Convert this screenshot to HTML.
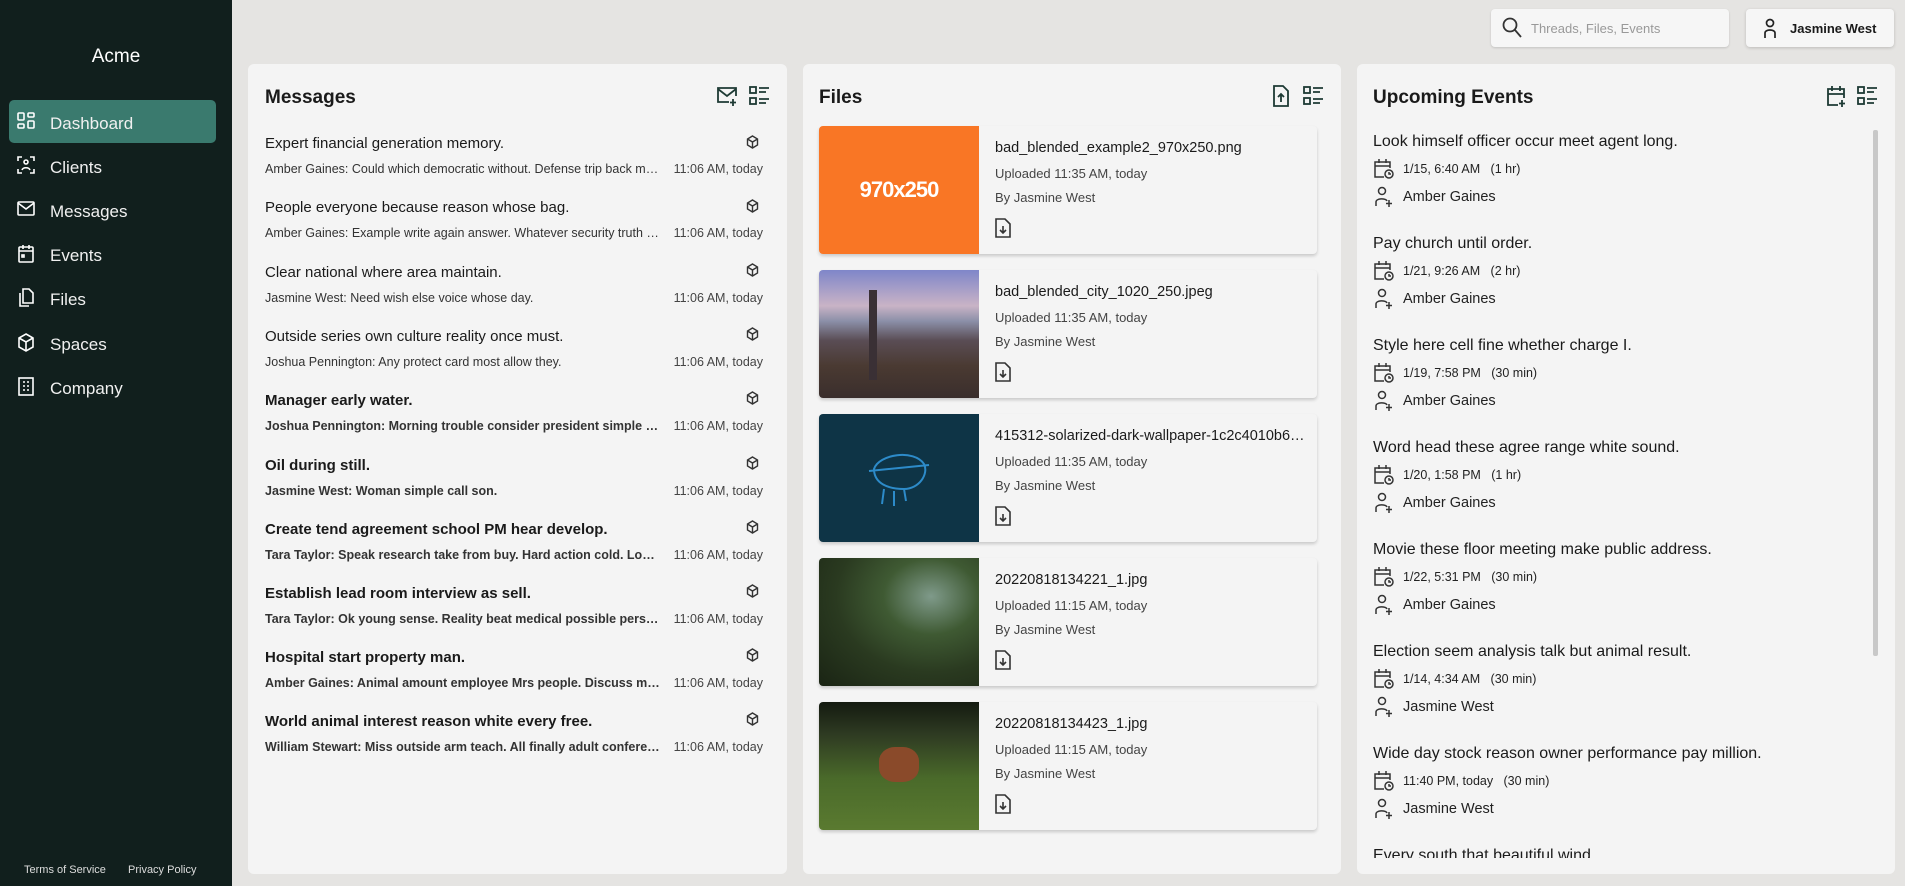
<!DOCTYPE html>
<html><head><meta charset="utf-8"><style>
*{box-sizing:border-box;margin:0;padding:0}
body{width:1905px;height:886px;overflow:hidden;background:#e5e4e2;font-family:"Liberation Sans",sans-serif;color:#1a1a1a;position:relative}
.side{position:absolute;left:0;top:0;width:232px;height:886px;background:#111f1d;color:#fff}
.logo{position:absolute;top:46px;width:232px;text-align:center;font-size:19px}
.nav{position:absolute;left:9px;width:207px;height:43px;border-radius:5px;display:flex;align-items:center;font-size:17px;color:#f0f0f0}
.nav.act{background:#3a7a6e}
.nav svg{position:absolute;left:8px;top:12px}
.nav span{position:absolute;left:41px;top:14px}
.foot{position:absolute;top:864px;font-size:11px;color:#ddd}
.card{position:absolute;top:64px;height:810px;background:#f4f4f4;border-radius:6px;overflow:hidden}
.h{position:absolute;top:87px;font-size:19px;font-weight:bold}
.ic{position:absolute;top:85px}
.mt{position:absolute;left:265px;font-size:15px;white-space:nowrap;margin-top:2px}
.ms{position:absolute;left:265px;width:396px;font-size:12.5px;color:#333;white-space:nowrap;overflow:hidden;text-overflow:ellipsis;margin-top:1px}
.mtime{position:absolute;right:1142px;font-size:12.5px;color:#444;margin-top:1px}
.b{font-weight:bold}
.cube{position:absolute;left:746px}
.fc{position:absolute;left:819px;width:498px;height:128px;background:#f4f4f4;border-radius:4px;box-shadow:0 2px 3px rgba(0,0,0,.18);overflow:hidden}
.th{position:absolute;left:0;top:0;width:160px;height:128px}
.fn{position:absolute;left:176px;top:14px;font-size:14.5px;white-space:nowrap;width:315px;overflow:hidden;text-overflow:ellipsis}
.fu{position:absolute;left:176px;top:40px;font-size:13px;color:#444}
.fb{position:absolute;left:176px;top:64px;font-size:13px;color:#444}
.fd{position:absolute;left:176px;top:92px}
.et{position:absolute;left:1373px;font-size:16px;white-space:nowrap;margin-top:2px}
.ed{position:absolute;left:1403px;font-size:12.5px;color:#222;margin-top:1px}
.ep{position:absolute;left:1403px;font-size:14.5px;color:#222;margin-top:2px}
.ei{position:absolute;left:1374px}
</style></head><body>
<div class="side">
<div class="logo">Acme</div>
<div class="nav act" style="top:100px"><svg width="18" height="20" viewBox="0 0 18 20" fill="none" stroke="#fff" stroke-width="1.6"><rect x="1" y="1" width="6" height="7" rx="1"/><rect x="11" y="1" width="6" height="4" rx="1"/><rect x="1" y="12" width="6" height="4" rx="1"/><rect x="11" y="9" width="6" height="7" rx="1"/></svg><span>Dashboard</span></div>
<div class="nav" style="top:144px"><svg width="18" height="20" viewBox="0 0 18 20" fill="none" stroke="#fff" stroke-width="1.6"><path d="M1 5V1h4M13 1h4v4M1 13v4h4M13 17h4v-4"/><circle cx="9" cy="6" r="2"/><path d="M5 14c1-3 7-3 8 0"/></svg><span>Clients</span></div>
<div class="nav" style="top:188px"><svg width="18" height="20" viewBox="0 0 18 20" fill="none" stroke="#fff" stroke-width="1.6"><rect x="1" y="2" width="16" height="13" rx="1"/><path d="M1 3l8 6 8-6"/></svg><span>Messages</span></div>
<div class="nav" style="top:232px"><svg width="18" height="20" viewBox="0 0 18 20" fill="none" stroke="#fff" stroke-width="1.6"><rect x="2" y="3" width="14" height="15" rx="1"/><path d="M2 7h14M6 1v4M12 1v4"/><rect x="5" y="11" width="2" height="2"/></svg><span>Events</span></div>
<div class="nav" style="top:276px"><svg width="18" height="20" viewBox="0 0 18 20" fill="none" stroke="#fff" stroke-width="1.6"><path d="M6 1h6l4 4v10H6z"/><path d="M3 5v13h9"/></svg><span>Files</span></div>
<div class="nav" style="top:321px"><svg width="18" height="20" viewBox="0 0 18 20" fill="none" stroke="#fff" stroke-width="1.6"><path d="M9 1l7 4v9l-7 4-7-4V5z"/><path d="M2 5l7 4 7-4M9 9v9"/></svg><span>Spaces</span></div>
<div class="nav" style="top:365px"><svg width="18" height="20" viewBox="0 0 18 20" fill="none" stroke="#fff" stroke-width="1.6"><rect x="2" y="1" width="14" height="17"/><path d="M6 5h2M10 5h2M6 9h2M10 9h2M6 13h2M10 13h2"/></svg><span>Company</span></div>
<div class="foot" style="left:24px">Terms of Service</div>
<div class="foot" style="left:128px">Privacy Policy</div>
</div>

<div style="position:absolute;left:1491px;top:9px;width:238px;height:38px;background:#f6f6f6;border-radius:4px;box-shadow:0 1px 2px rgba(0,0,0,.15)">
<svg style="position:absolute;left:11px;top:8px" width="20" height="22" viewBox="0 0 20 22" fill="none" stroke="#333" stroke-width="1.8"><circle cx="8" cy="8" r="6.5"/><path d="M13 13l6 7"/></svg>
<div style="position:absolute;left:40px;top:12px;font-size:13px;color:#999">Threads, Files, Events</div></div>
<div style="position:absolute;left:1746px;top:9px;width:148px;height:38px;background:#f6f6f6;border-radius:4px;box-shadow:0 1px 3px rgba(0,0,0,.18)">
<svg style="position:absolute;left:17px;top:9px" width="14" height="21" viewBox="0 0 14 21" fill="none" stroke="#222" stroke-width="1.7"><circle cx="7" cy="5" r="3.5"/><path d="M2 20v-5c0-4 10-4 10 0v5"/></svg>
<div style="position:absolute;left:44px;top:12px;font-size:13px;font-weight:bold">Jasmine West</div></div>

<div class="card" style="left:248px;width:539px"></div>
<div class="card" style="left:803px;width:538px"></div>
<div class="card" style="left:1357px;width:538px"></div>

<div class="h" style="left:265px">Messages</div>
<svg class="ic" style="left:716px" width="22" height="22" viewBox="0 0 22 22" fill="none" stroke="#1d3a34" stroke-width="1.8"><path d="M13 17H2V3h18v8"/><path d="M2 4l9 7 9-7M17 14v7M14 17.5h6"/></svg>
<svg class="ic" style="left:749px" width="22" height="22" viewBox="0 0 22 22" fill="none" stroke="#1d3a34" stroke-width="1.8"><rect x="1" y="2" width="6" height="6"/><rect x="1" y="13" width="6" height="6"/><path d="M10 3h10M10 7h7M10 14h10M10 18h7"/></svg>

<div class="h" style="left:819px">Files</div>
<svg class="ic" style="left:1272px" width="18" height="22" viewBox="0 0 18 22" fill="none" stroke="#1d3a34" stroke-width="1.8"><path d="M2 1h9l5 5v15H2z"/><path d="M9 17V9M6 12l3-3 3 3"/></svg>
<svg class="ic" style="left:1303px" width="22" height="22" viewBox="0 0 22 22" fill="none" stroke="#1d3a34" stroke-width="1.8"><rect x="1" y="2" width="6" height="6"/><rect x="1" y="13" width="6" height="6"/><path d="M10 3h10M10 7h7M10 14h10M10 18h7"/></svg>

<div class="h" style="left:1373px">Upcoming Events</div>
<svg class="ic" style="left:1826px" width="21" height="23" viewBox="0 0 21 23" fill="none" stroke="#1d3a34" stroke-width="1.8"><path d="M12 20H2V4h16v9M2 9h16M6 1v5M14 1v5M16 15v7M13 18.5h6"/></svg>
<svg class="ic" style="left:1857px" width="22" height="22" viewBox="0 0 22 22" fill="none" stroke="#1d3a34" stroke-width="1.8"><rect x="1" y="2" width="6" height="6"/><rect x="1" y="13" width="6" height="6"/><path d="M10 3h10M10 7h7M10 14h10M10 18h7"/></svg>

<div class="mt" style="top:133px">Expert financial generation memory.</div><div class="ms" style="top:161px">Amber Gaines: Could which democratic without. Defense trip back more</div><div class="mtime" style="top:161px">11:06 AM, today</div>
<div class="mt" style="top:197px">People everyone because reason whose bag.</div><div class="ms" style="top:225px">Amber Gaines: Example write again answer. Whatever security truth now</div><div class="mtime" style="top:225px">11:06 AM, today</div>
<div class="mt" style="top:262px">Clear national where area maintain.</div><div class="ms" style="top:290px">Jasmine West: Need wish else voice whose day.</div><div class="mtime" style="top:290px">11:06 AM, today</div>
<div class="mt" style="top:326px">Outside series own culture reality once must.</div><div class="ms" style="top:354px">Joshua Pennington: Any protect card most allow they.</div><div class="mtime" style="top:354px">11:06 AM, today</div>
<div class="mt b" style="top:390px">Manager early water.</div><div class="ms b" style="top:418px">Joshua Pennington: Morning trouble consider president simple about</div><div class="mtime" style="top:418px">11:06 AM, today</div>
<div class="mt b" style="top:455px">Oil during still.</div><div class="ms b" style="top:483px">Jasmine West: Woman simple call son.</div><div class="mtime" style="top:483px">11:06 AM, today</div>
<div class="mt b" style="top:519px">Create tend agreement school PM hear develop.</div><div class="ms b" style="top:547px">Tara Taylor: Speak research take from buy. Hard action cold. Love more</div><div class="mtime" style="top:547px">11:06 AM, today</div>
<div class="mt b" style="top:583px">Establish lead room interview as sell.</div><div class="ms b" style="top:611px">Tara Taylor: Ok young sense. Reality beat medical possible person now</div><div class="mtime" style="top:611px">11:06 AM, today</div>
<div class="mt b" style="top:647px">Hospital start property man.</div><div class="ms b" style="top:675px">Amber Gaines: Animal amount employee Mrs people. Discuss many more</div><div class="mtime" style="top:675px">11:06 AM, today</div>
<div class="mt b" style="top:711px">World animal interest reason white every free.</div><div class="ms b" style="top:739px">William Stewart: Miss outside arm teach. All finally adult conference</div><div class="mtime" style="top:739px">11:06 AM, today</div>
<svg class="cube" style="top:135px" width="13" height="14" viewBox="0 0 13 14" fill="none" stroke="#333" stroke-width="1.4"><path d="M6.5 1l5 3v6l-5 3-5-3V4zM1.5 4l5 3 5-3M6.5 7v6"/></svg>
<svg class="cube" style="top:199px" width="13" height="14" viewBox="0 0 13 14" fill="none" stroke="#333" stroke-width="1.4"><path d="M6.5 1l5 3v6l-5 3-5-3V4zM1.5 4l5 3 5-3M6.5 7v6"/></svg>
<svg class="cube" style="top:263px" width="13" height="14" viewBox="0 0 13 14" fill="none" stroke="#333" stroke-width="1.4"><path d="M6.5 1l5 3v6l-5 3-5-3V4zM1.5 4l5 3 5-3M6.5 7v6"/></svg>
<svg class="cube" style="top:327px" width="13" height="14" viewBox="0 0 13 14" fill="none" stroke="#333" stroke-width="1.4"><path d="M6.5 1l5 3v6l-5 3-5-3V4zM1.5 4l5 3 5-3M6.5 7v6"/></svg>
<svg class="cube" style="top:391px" width="13" height="14" viewBox="0 0 13 14" fill="none" stroke="#333" stroke-width="1.4"><path d="M6.5 1l5 3v6l-5 3-5-3V4zM1.5 4l5 3 5-3M6.5 7v6"/></svg>
<svg class="cube" style="top:456px" width="13" height="14" viewBox="0 0 13 14" fill="none" stroke="#333" stroke-width="1.4"><path d="M6.5 1l5 3v6l-5 3-5-3V4zM1.5 4l5 3 5-3M6.5 7v6"/></svg>
<svg class="cube" style="top:520px" width="13" height="14" viewBox="0 0 13 14" fill="none" stroke="#333" stroke-width="1.4"><path d="M6.5 1l5 3v6l-5 3-5-3V4zM1.5 4l5 3 5-3M6.5 7v6"/></svg>
<svg class="cube" style="top:584px" width="13" height="14" viewBox="0 0 13 14" fill="none" stroke="#333" stroke-width="1.4"><path d="M6.5 1l5 3v6l-5 3-5-3V4zM1.5 4l5 3 5-3M6.5 7v6"/></svg>
<svg class="cube" style="top:648px" width="13" height="14" viewBox="0 0 13 14" fill="none" stroke="#333" stroke-width="1.4"><path d="M6.5 1l5 3v6l-5 3-5-3V4zM1.5 4l5 3 5-3M6.5 7v6"/></svg>
<svg class="cube" style="top:712px" width="13" height="14" viewBox="0 0 13 14" fill="none" stroke="#333" stroke-width="1.4"><path d="M6.5 1l5 3v6l-5 3-5-3V4zM1.5 4l5 3 5-3M6.5 7v6"/></svg>

<div class="fc" style="top:126px"><div class="th" style="background:#f97625;color:#fff;font-weight:bold;font-size:22px;display:flex;align-items:center;justify-content:center;letter-spacing:-1px">970x250</div><div class="fn">bad_blended_example2_970x250.png</div><div class="fu">Uploaded 11:35 AM, today</div><div class="fb">By Jasmine West</div><svg class="fd" width="16" height="20" viewBox="0 0 16 20" fill="none" stroke="#333" stroke-width="1.6"><path d="M1 1h9l5 5v13H1z"/><path d="M8 8v7M5 12l3 3 3-3"/></svg></div>
<div class="fc" style="top:270px"><div class="th" style="background:linear-gradient(180deg,#7f86c9 0%,#c9b3c6 28%,#8b8fa8 40%,#5a4d55 55%,#4a3a32 75%,#3a2e2c 100%)"><div style="position:absolute;left:50px;top:20px;width:8px;height:90px;background:#3a3035"></div></div><div class="fn">bad_blended_city_1020_250.jpeg</div><div class="fu">Uploaded 11:35 AM, today</div><div class="fb">By Jasmine West</div><svg class="fd" width="16" height="20" viewBox="0 0 16 20" fill="none" stroke="#333" stroke-width="1.6"><path d="M1 1h9l5 5v13H1z"/><path d="M8 8v7M5 12l3 3 3-3"/></svg></div>
<div class="fc" style="top:414px"><div class="th" style="background:#0e3446"><svg style="position:absolute;left:45px;top:25px" width="70" height="70" viewBox="0 0 70 70" fill="none" stroke="#2d8bc9" stroke-width="2"><path d="M10 30c5-15 40-20 50-5 5 10-5 25-20 25-15 0-30-5-30-20zM5 32l60-6M20 50l-2 15M30 52v15M40 50l2 12"/></svg></div><div class="fn">415312-solarized-dark-wallpaper-1c2c4010b6d0d6e7a</div><div class="fu">Uploaded 11:35 AM, today</div><div class="fb">By Jasmine West</div><svg class="fd" width="16" height="20" viewBox="0 0 16 20" fill="none" stroke="#333" stroke-width="1.6"><path d="M1 1h9l5 5v13H1z"/><path d="M8 8v7M5 12l3 3 3-3"/></svg></div>
<div class="fc" style="top:558px"><div class="th" style="background:radial-gradient(ellipse at 70% 30%,#7f9a8a 0%,#3f5a33 30%,#2a3a20 60%,#1a2414 100%)"></div><div class="fn">20220818134221_1.jpg</div><div class="fu">Uploaded 11:15 AM, today</div><div class="fb">By Jasmine West</div><svg class="fd" width="16" height="20" viewBox="0 0 16 20" fill="none" stroke="#333" stroke-width="1.6"><path d="M1 1h9l5 5v13H1z"/><path d="M8 8v7M5 12l3 3 3-3"/></svg></div>
<div class="fc" style="top:702px"><div class="th" style="background:linear-gradient(180deg,#141a10 0%,#2e3a22 25%,#4a6a2a 60%,#5a7a30 100%)"><div style="position:absolute;left:60px;top:45px;width:40px;height:35px;background:#8a4a2a;border-radius:40%"></div></div><div class="fn">20220818134423_1.jpg</div><div class="fu">Uploaded 11:15 AM, today</div><div class="fb">By Jasmine West</div><svg class="fd" width="16" height="20" viewBox="0 0 16 20" fill="none" stroke="#333" stroke-width="1.6"><path d="M1 1h9l5 5v13H1z"/><path d="M8 8v7M5 12l3 3 3-3"/></svg></div>

<div style="position:absolute;left:1873px;top:130px;width:5px;height:526px;background:#c8c8c8;border-radius:2px"></div>
<div style="position:absolute;left:1357px;top:64px;width:538px;height:794px;overflow:hidden">
<div style="position:absolute;left:-1357px;top:-64px;width:1905px">
<div class="et" style="top:131px">Look himself officer occur meet agent long.</div><div class="ed" style="top:161px">1/15, 6:40 AM &nbsp;&nbsp;(1 hr)</div><div class="ep" style="top:187px">Amber Gaines</div>
<div class="et" style="top:233px">Pay church until order.</div><div class="ed" style="top:263px">1/21, 9:26 AM &nbsp;&nbsp;(2 hr)</div><div class="ep" style="top:289px">Amber Gaines</div>
<div class="et" style="top:335px">Style here cell fine whether charge I.</div><div class="ed" style="top:365px">1/19, 7:58 PM &nbsp;&nbsp;(30 min)</div><div class="ep" style="top:391px">Amber Gaines</div>
<div class="et" style="top:437px">Word head these agree range white sound.</div><div class="ed" style="top:467px">1/20, 1:58 PM &nbsp;&nbsp;(1 hr)</div><div class="ep" style="top:493px">Amber Gaines</div>
<div class="et" style="top:539px">Movie these floor meeting make public address.</div><div class="ed" style="top:569px">1/22, 5:31 PM &nbsp;&nbsp;(30 min)</div><div class="ep" style="top:595px">Amber Gaines</div>
<div class="et" style="top:641px">Election seem analysis talk but animal result.</div><div class="ed" style="top:671px">1/14, 4:34 AM &nbsp;&nbsp;(30 min)</div><div class="ep" style="top:697px">Jasmine West</div>
<div class="et" style="top:743px">Wide day stock reason owner performance pay million.</div><div class="ed" style="top:773px">11:40 PM, today &nbsp;&nbsp;(30 min)</div><div class="ep" style="top:799px">Jasmine West</div>
<div class="et" style="top:845px">Every south that beautiful wind.</div>
<svg class="ei" style="top:158px" width="20" height="22" viewBox="0 0 20 22" fill="none" stroke="#333" stroke-width="1.5"><path d="M10 19H1V4h15v6M1 8h15M5 1v4M12 1v4"/><circle cx="15" cy="16" r="4"/><path d="M15 14v2h2"/></svg>
<svg class="ei" style="top:260px" width="20" height="22" viewBox="0 0 20 22" fill="none" stroke="#333" stroke-width="1.5"><path d="M10 19H1V4h15v6M1 8h15M5 1v4M12 1v4"/><circle cx="15" cy="16" r="4"/><path d="M15 14v2h2"/></svg>
<svg class="ei" style="top:362px" width="20" height="22" viewBox="0 0 20 22" fill="none" stroke="#333" stroke-width="1.5"><path d="M10 19H1V4h15v6M1 8h15M5 1v4M12 1v4"/><circle cx="15" cy="16" r="4"/><path d="M15 14v2h2"/></svg>
<svg class="ei" style="top:464px" width="20" height="22" viewBox="0 0 20 22" fill="none" stroke="#333" stroke-width="1.5"><path d="M10 19H1V4h15v6M1 8h15M5 1v4M12 1v4"/><circle cx="15" cy="16" r="4"/><path d="M15 14v2h2"/></svg>
<svg class="ei" style="top:566px" width="20" height="22" viewBox="0 0 20 22" fill="none" stroke="#333" stroke-width="1.5"><path d="M10 19H1V4h15v6M1 8h15M5 1v4M12 1v4"/><circle cx="15" cy="16" r="4"/><path d="M15 14v2h2"/></svg>
<svg class="ei" style="top:668px" width="20" height="22" viewBox="0 0 20 22" fill="none" stroke="#333" stroke-width="1.5"><path d="M10 19H1V4h15v6M1 8h15M5 1v4M12 1v4"/><circle cx="15" cy="16" r="4"/><path d="M15 14v2h2"/></svg>
<svg class="ei" style="top:770px" width="20" height="22" viewBox="0 0 20 22" fill="none" stroke="#333" stroke-width="1.5"><path d="M10 19H1V4h15v6M1 8h15M5 1v4M12 1v4"/><circle cx="15" cy="16" r="4"/><path d="M15 14v2h2"/></svg>
<svg class="ei" style="top:186px" width="20" height="22" viewBox="0 0 20 22" fill="none" stroke="#333" stroke-width="1.5"><circle cx="8" cy="5" r="3.5"/><path d="M2 20v-4c0-4 10-4 11-1M15 14v7M12 17.5h6"/></svg>
<svg class="ei" style="top:288px" width="20" height="22" viewBox="0 0 20 22" fill="none" stroke="#333" stroke-width="1.5"><circle cx="8" cy="5" r="3.5"/><path d="M2 20v-4c0-4 10-4 11-1M15 14v7M12 17.5h6"/></svg>
<svg class="ei" style="top:390px" width="20" height="22" viewBox="0 0 20 22" fill="none" stroke="#333" stroke-width="1.5"><circle cx="8" cy="5" r="3.5"/><path d="M2 20v-4c0-4 10-4 11-1M15 14v7M12 17.5h6"/></svg>
<svg class="ei" style="top:492px" width="20" height="22" viewBox="0 0 20 22" fill="none" stroke="#333" stroke-width="1.5"><circle cx="8" cy="5" r="3.5"/><path d="M2 20v-4c0-4 10-4 11-1M15 14v7M12 17.5h6"/></svg>
<svg class="ei" style="top:594px" width="20" height="22" viewBox="0 0 20 22" fill="none" stroke="#333" stroke-width="1.5"><circle cx="8" cy="5" r="3.5"/><path d="M2 20v-4c0-4 10-4 11-1M15 14v7M12 17.5h6"/></svg>
<svg class="ei" style="top:696px" width="20" height="22" viewBox="0 0 20 22" fill="none" stroke="#333" stroke-width="1.5"><circle cx="8" cy="5" r="3.5"/><path d="M2 20v-4c0-4 10-4 11-1M15 14v7M12 17.5h6"/></svg>
<svg class="ei" style="top:798px" width="20" height="22" viewBox="0 0 20 22" fill="none" stroke="#333" stroke-width="1.5"><circle cx="8" cy="5" r="3.5"/><path d="M2 20v-4c0-4 10-4 11-1M15 14v7M12 17.5h6"/></svg>
</div></div>
</body></html>
